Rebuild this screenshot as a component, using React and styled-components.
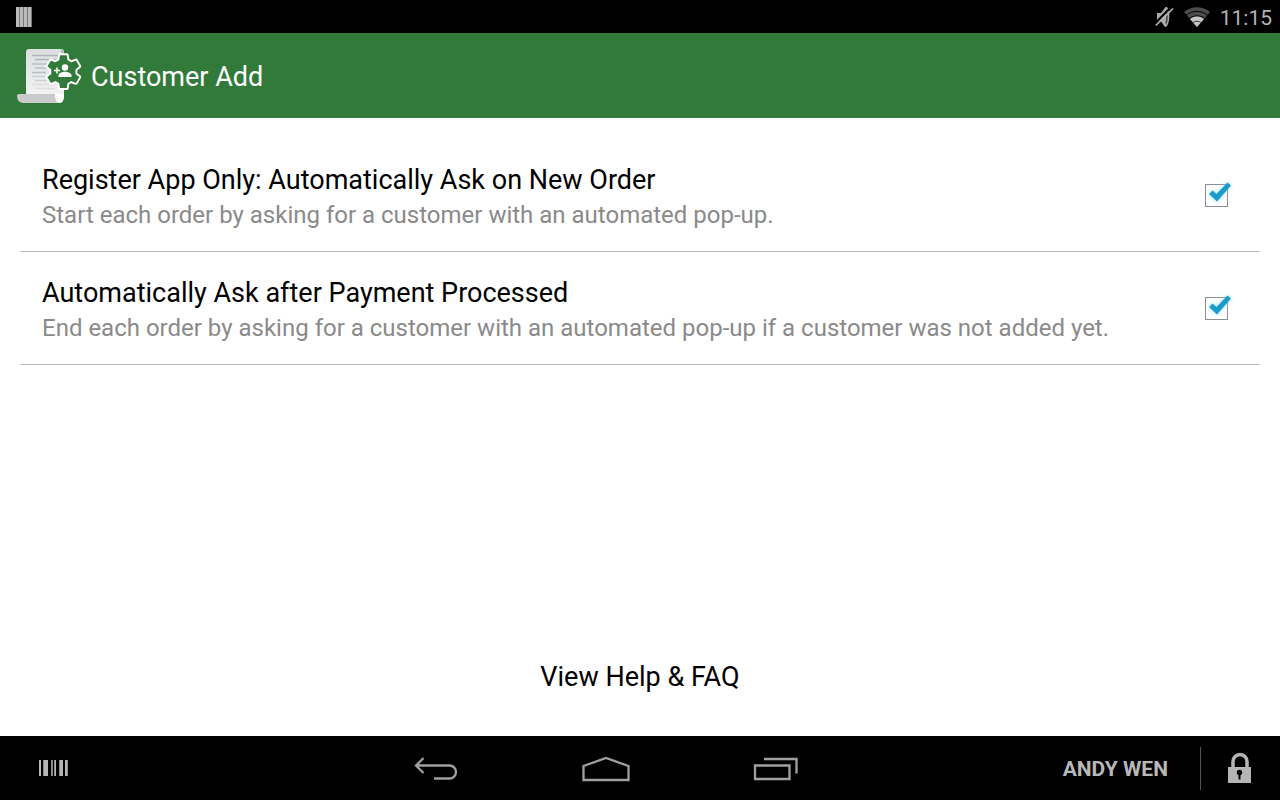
import { useState } from 'react'
import styled, { createGlobalStyle } from 'styled-components'

// Styles
const GlobalStyle=createGlobalStyle`
    *{
        box-sizing: border-box;
    }
    body{
        margin: 0;
        background-color: #fff;
        font-family: Roboto, 'Liberation Sans', sans-serif;
    }
`
const Screen=styled.div`
    display: flex;
    flex-direction: column;
    min-height: 100vh;
`
const StatusBar=styled.div`
    display: flex;
    align-items: center;
    justify-content: space-between;
    height: 33px;
    padding: 0 8px 0 16px;
    background-color: #000;
`
const StatusIcons=styled.div`
    display: flex;
    align-items: center;
    gap: 10px;
`
const Clock=styled.span`
    color: #b3b3b3;
    font-size: 21px;
    line-height: 32px;
    padding-top: 2px;
`
const ActionBar=styled.header`
    display: flex;
    align-items: center;
    gap: 8px;
    height: 85px;
    padding: 0 16px;
    background-color: #317a3a;
`
const Title=styled.h1`
    margin: 0;
    color: #fff;
    font-weight: 400;
    font-size: 27px;
    line-height: 34px;
    padding-top: 2px;
`
const Content=styled.main`
    display: flex;
    flex: 1;
    flex-direction: column;
    padding: 21px 21px 42px;
`
const SettingRow=styled.label`
    display: flex;
    align-items: center;
    justify-content: space-between;
    padding: 24px 25px 18px 21px;
    border-bottom: 1px solid #bebebe;
`
const SettingName=styled.span`
    display: block;
    color: #000;
    font-size: 27px;
    line-height: 34px;
`
const SettingDetail=styled.span`
    display: block;
    color: #8a8a8a;
    font-size: 24px;
    line-height: 36px;
`
const CheckHolder=styled.span`
    position: relative;
    flex: none;
    width: 32px;
    height: 32px;
    margin-bottom: 8px;
`
const CheckInput=styled.input`
    appearance: none;
    display: block;
    width: 23px;
    height: 23px;
    margin: 6px 3px;
    border: 1px solid #8f8f8f;
    background-color: #fff;
`
const CheckMark=styled.svg`
    position: absolute;
    top: 0;
    left: 0;
    pointer-events: none;
    filter: drop-shadow(0 0 2px #9be0fa);
`
const HelpLink=styled.a`
    align-self: center;
    margin-top: auto;
    color: #000;
    font-size: 27px;
    line-height: 34px;
    text-decoration: none;
`
const NavBar=styled.nav`
    display: grid;
    grid-template-columns: 351fr 510fr 419fr;
    align-items: center;
    height: 64px;
    background-color: #000;
`
const NavSide=styled.div`
    display: flex;
    align-items: center;
    justify-content: ${({$end})=>$end ? 'flex-end' : 'flex-start'};
    padding: 0 27px 0 38px;
`
const NavKeys=styled.div`
    display: grid;
    grid-template-columns: repeat(3, 1fr);
    padding-top: 2px;
`
const IconButton=styled.button`
    display: flex;
    align-items: center;
    justify-content: center;
    padding: 0;
    border: none;
    background: none;
    cursor: pointer;
`
const UserButton=styled(IconButton)`
    padding-top: 2px;
    color: #b8b8b8;
    font-family: inherit;
    font-weight: 700;
    font-size: 21px;
    line-height: 32px;
`
const Divider=styled.span`
    width: 1px;
    height: 43px;
    margin: 0 26px 0 32px;
    background-color: #555;
`

// Icons
const BarsIcon=()=>(
    <svg width="16" height="20" viewBox="0 0 16 20" aria-hidden="true">
        <path d="M0 0H16V20H0Z" fill="#777"/>
        <path d="M0 0h3v20H0ZM4 0h3v20H4ZM8 0h3v20H8ZM12 0h3v20h-3Z" fill="#bcbcbc"/>
    </svg>
)

const MutedIcon=()=>(
    <svg width="19" height="22" viewBox="0 0 19 22" aria-hidden="true">
        <path d="M2 7h4l4.500-6h1.500c2 2.500 2.500 6 2.300 10s-1 8-3.300 10h-1L6 15.500H2Z" fill="#aaa"/>
        <path d="M11 5c1.200 3.500 1.200 9 0 12.500" fill="none" stroke="#444" strokeWidth="1.500"/>
        <path d="M0 17.500 16 1" stroke="#000" strokeWidth="2"/>
        <path d="M.8 19.500 18 2.500" stroke="#b3b3b3" strokeWidth="1.700"/>
    </svg>
)

const WifiIcon=()=>(
    <svg width="26" height="20" viewBox="0 0 26 20" aria-hidden="true">
        <path d="M0 5C7-1.300 19-1.300 26 5L13 20Z" fill="#4c4c4c"/>
        <path d="M6 12c4-4 10-4 14 0L13 20Z" fill="#c4c4c4"/>
        <path d="M2.500 8c6-4.800 15-4.800 21 0M5 12c4.500-4.200 11.500-4.200 16 0" fill="none" stroke="#000" strokeWidth="1"/>
        <path d="M8.500 15.800c2.500-2 6.500-2 9 0" fill="none" stroke="#333" strokeWidth="1"/>
    </svg>
)

const AppIcon=()=>(
    <svg width="67" height="58" viewBox="0 0 67 58" aria-hidden="true">
        <defs>
            <linearGradient id="paper" x1="0" y1="0" x2="0" y2="1">
                <stop offset="0" stopColor="#dcdee0"/>
                <stop offset="1" stopColor="#f6f6f6"/>
            </linearGradient>
        </defs>
        <path d="M13 2H45q3 0 3 3V50q0 5.500-5 5.500H10V5q0-3 3-3Z" fill="url(#paper)"/>
        <path d="M45 2q3 0 3 3V9h-3Z" fill="#b9bdc0"/>
        <path d="M1 48.500q0-1.500 2-1.500H38q1.500 0 1.500 2 0 4 3.500 7H7q-6-.5-6-7.500Z" fill="#c8cacc"/>
        <path d="M39 47q0 9 4.500 9T48 47Z" fill="#fff"/>
        <g fill="none" strokeWidth="1.300">
            <path d="M16 8.500h28M19 12.500h24" stroke="#b0b4b7"/>
            <path d="M16 17h20M19 21h14M16 25.500h14" stroke="#bbbec1"/>
            <path d="M16 29.500h16M19 33.500h12" stroke="#cdcfd1"/>
            <path d="M16 37.500h19M19 41.500h20" stroke="#dedfe0"/>
        </g>
        <path
            transform="translate(26.500 3.800) scale(1.740)"
            d="M19.430 12.980c.04-.32.07-.64.07-.98s-.03-.66-.07-.98l2.110-1.650c.19-.15.24-.42.12-.64l-2-3.460c-.12-.22-.39-.3-.61-.22l-2.490 1c-.52-.4-1.080-.73-1.690-.98l-.38-2.650C14.460 2.180 14.250 2 14 2h-4c-.25 0-.46.18-.49.42l-.38 2.650c-.61.25-1.170.59-1.690.98l-2.490-1c-.23-.09-.49 0-.61.22l-2 3.460c-.13.22-.07.49.12.64l2.110 1.650c-.04.32-.07.65-.07.98s.03.66.07.98l-2.110 1.650c-.19.15-.24.42-.12.64l2 3.460c.12.22.39.3.61.22l2.490-1c.52.4 1.080.73 1.690.98l.38 2.650c.03.24.24.42.49.42h4c.25 0 .46-.18.49-.42l.38-2.650c.61-.25 1.170-.59 1.690-.98l2.490 1c.23.09.49 0 .61-.22l2-3.460c.12-.22.07-.49-.12-.64l-2.110-1.650z"
            fill="#317a3a"
            stroke="#fff"
            strokeWidth="1.100"
            strokeLinejoin="round"
        />
        <circle cx="49" cy="20.500" r="3.200" fill="#fff"/>
        <path d="M42.500 30v-1.500c0-2.500 4-3.700 6.500-3.700s6.500 1.200 6.500 3.700V30Z" fill="#fff"/>
        <path d="M38 23.500h6M41 20.500v6" stroke="#fff" strokeWidth="1.500"/>
    </svg>
)

const BarcodeIcon=()=>(
    <svg width="31" height="16" viewBox="0 0 31 16" aria-hidden="true">
        <path d="M1 0h2v16H1ZM6 0h4v16H6ZM22 0h3v16h-3ZM17 0h1v16h-1ZM27 0h2v16h-2Z" fill="#b5b5b5"/>
        <path d="M13 0h2v16h-2ZM16 0h1v16h-1ZM21 0h1v16h-1ZM5 0h1v16H5ZM29 0h1v16h-1Z" fill="#8a8a8a"/>
    </svg>
)

const BackIcon=()=>(
    <svg width="44" height="24" viewBox="0 0 44 24" fill="none" stroke="#a0a0a0" strokeWidth="2.300" aria-hidden="true">
        <path d="M9.500 1 2 8.500 9.500 16M2 8.500H35.500a6.500 6.500 0 0 1 0 13H20"/>
    </svg>
)

const HomeIcon=()=>(
    <svg width="48" height="26" viewBox="0 0 48 26" fill="none" stroke="#a0a0a0" strokeWidth="2.300" aria-hidden="true">
        <path d="M1.500 24V10L24 2l22.500 8v14Z"/>
    </svg>
)

const RecentIcon=()=>(
    <svg width="46" height="24" viewBox="0 0 46 24" fill="none" stroke="#a0a0a0" strokeWidth="2.300" aria-hidden="true">
        <path d="M2 8.500H36.500V22H2ZM11 2H43.500V16.500"/>
    </svg>
)

const LockIcon=()=>(
    <svg width="26" height="32" viewBox="0 0 26 32" aria-hidden="true">
        <path d="M6 15V9.500a7 7 0 0 1 14 0V15" fill="none" stroke="#b5b5b5" strokeWidth="3.500"/>
        <path d="M1 15h23v16H1Z" fill="#b5b5b5"/>
        <circle cx="12.500" cy="20.500" r="2.700" fill="#000"/>
        <path d="M12.500 21v6.500" stroke="#000" strokeWidth="2"/>
    </svg>
)

// Components
const Setting=({name,detail})=>{
    const [checked,setChecked]=useState(true)

    return(
        <SettingRow>
            <span>
                <SettingName>{name}</SettingName>
                <SettingDetail>{detail}</SettingDetail>
            </span>
            <CheckHolder>
                <CheckInput
                    type='checkbox'
                    checked={checked}
                    onChange={(e)=>setChecked(e.target.checked)}
                />
                {checked && (
                    <CheckMark width="32" height="32" viewBox="0 0 32 32" aria-hidden="true">
                        <path d="M7 16 10.500 12.500 14.500 16 25.500 4.500 29 7.500 15 23.500Z" fill="#1c9ccb"/>
                    </CheckMark>
                )}
            </CheckHolder>
        </SettingRow>
    )
}

const App=()=>{
    return(
        <Screen>
            <GlobalStyle />
            <StatusBar>
                <BarsIcon />
                <StatusIcons>
                    <MutedIcon />
                    <WifiIcon />
                    <Clock>11:15</Clock>
                </StatusIcons>
            </StatusBar>
            <ActionBar>
                <AppIcon />
                <Title>Customer Add</Title>
            </ActionBar>
            <Content>
                <Setting
                    name='Register App Only: Automatically Ask on New Order'
                    detail='Start each order by asking for a customer with an automated pop-up.'
                />
                <Setting
                    name='Automatically Ask after Payment Processed'
                    detail='End each order by asking for a customer with an automated pop-up if a customer was not added yet.'
                />
                <HelpLink href='#help'>View Help &amp; FAQ</HelpLink>
            </Content>
            {/* System navigation */}
            <NavBar>
                <NavSide>
                    <IconButton aria-label='Scan'><BarcodeIcon /></IconButton>
                </NavSide>
                <NavKeys>
                    <IconButton aria-label='Back'><BackIcon /></IconButton>
                    <IconButton aria-label='Home'><HomeIcon /></IconButton>
                    <IconButton aria-label='Recent apps'><RecentIcon /></IconButton>
                </NavKeys>
                <NavSide $end>
                    <UserButton>ANDY WEN</UserButton>
                    <Divider />
                    <IconButton aria-label='Lock'><LockIcon /></IconButton>
                </NavSide>
            </NavBar>
        </Screen>
    )
}

export default App;
